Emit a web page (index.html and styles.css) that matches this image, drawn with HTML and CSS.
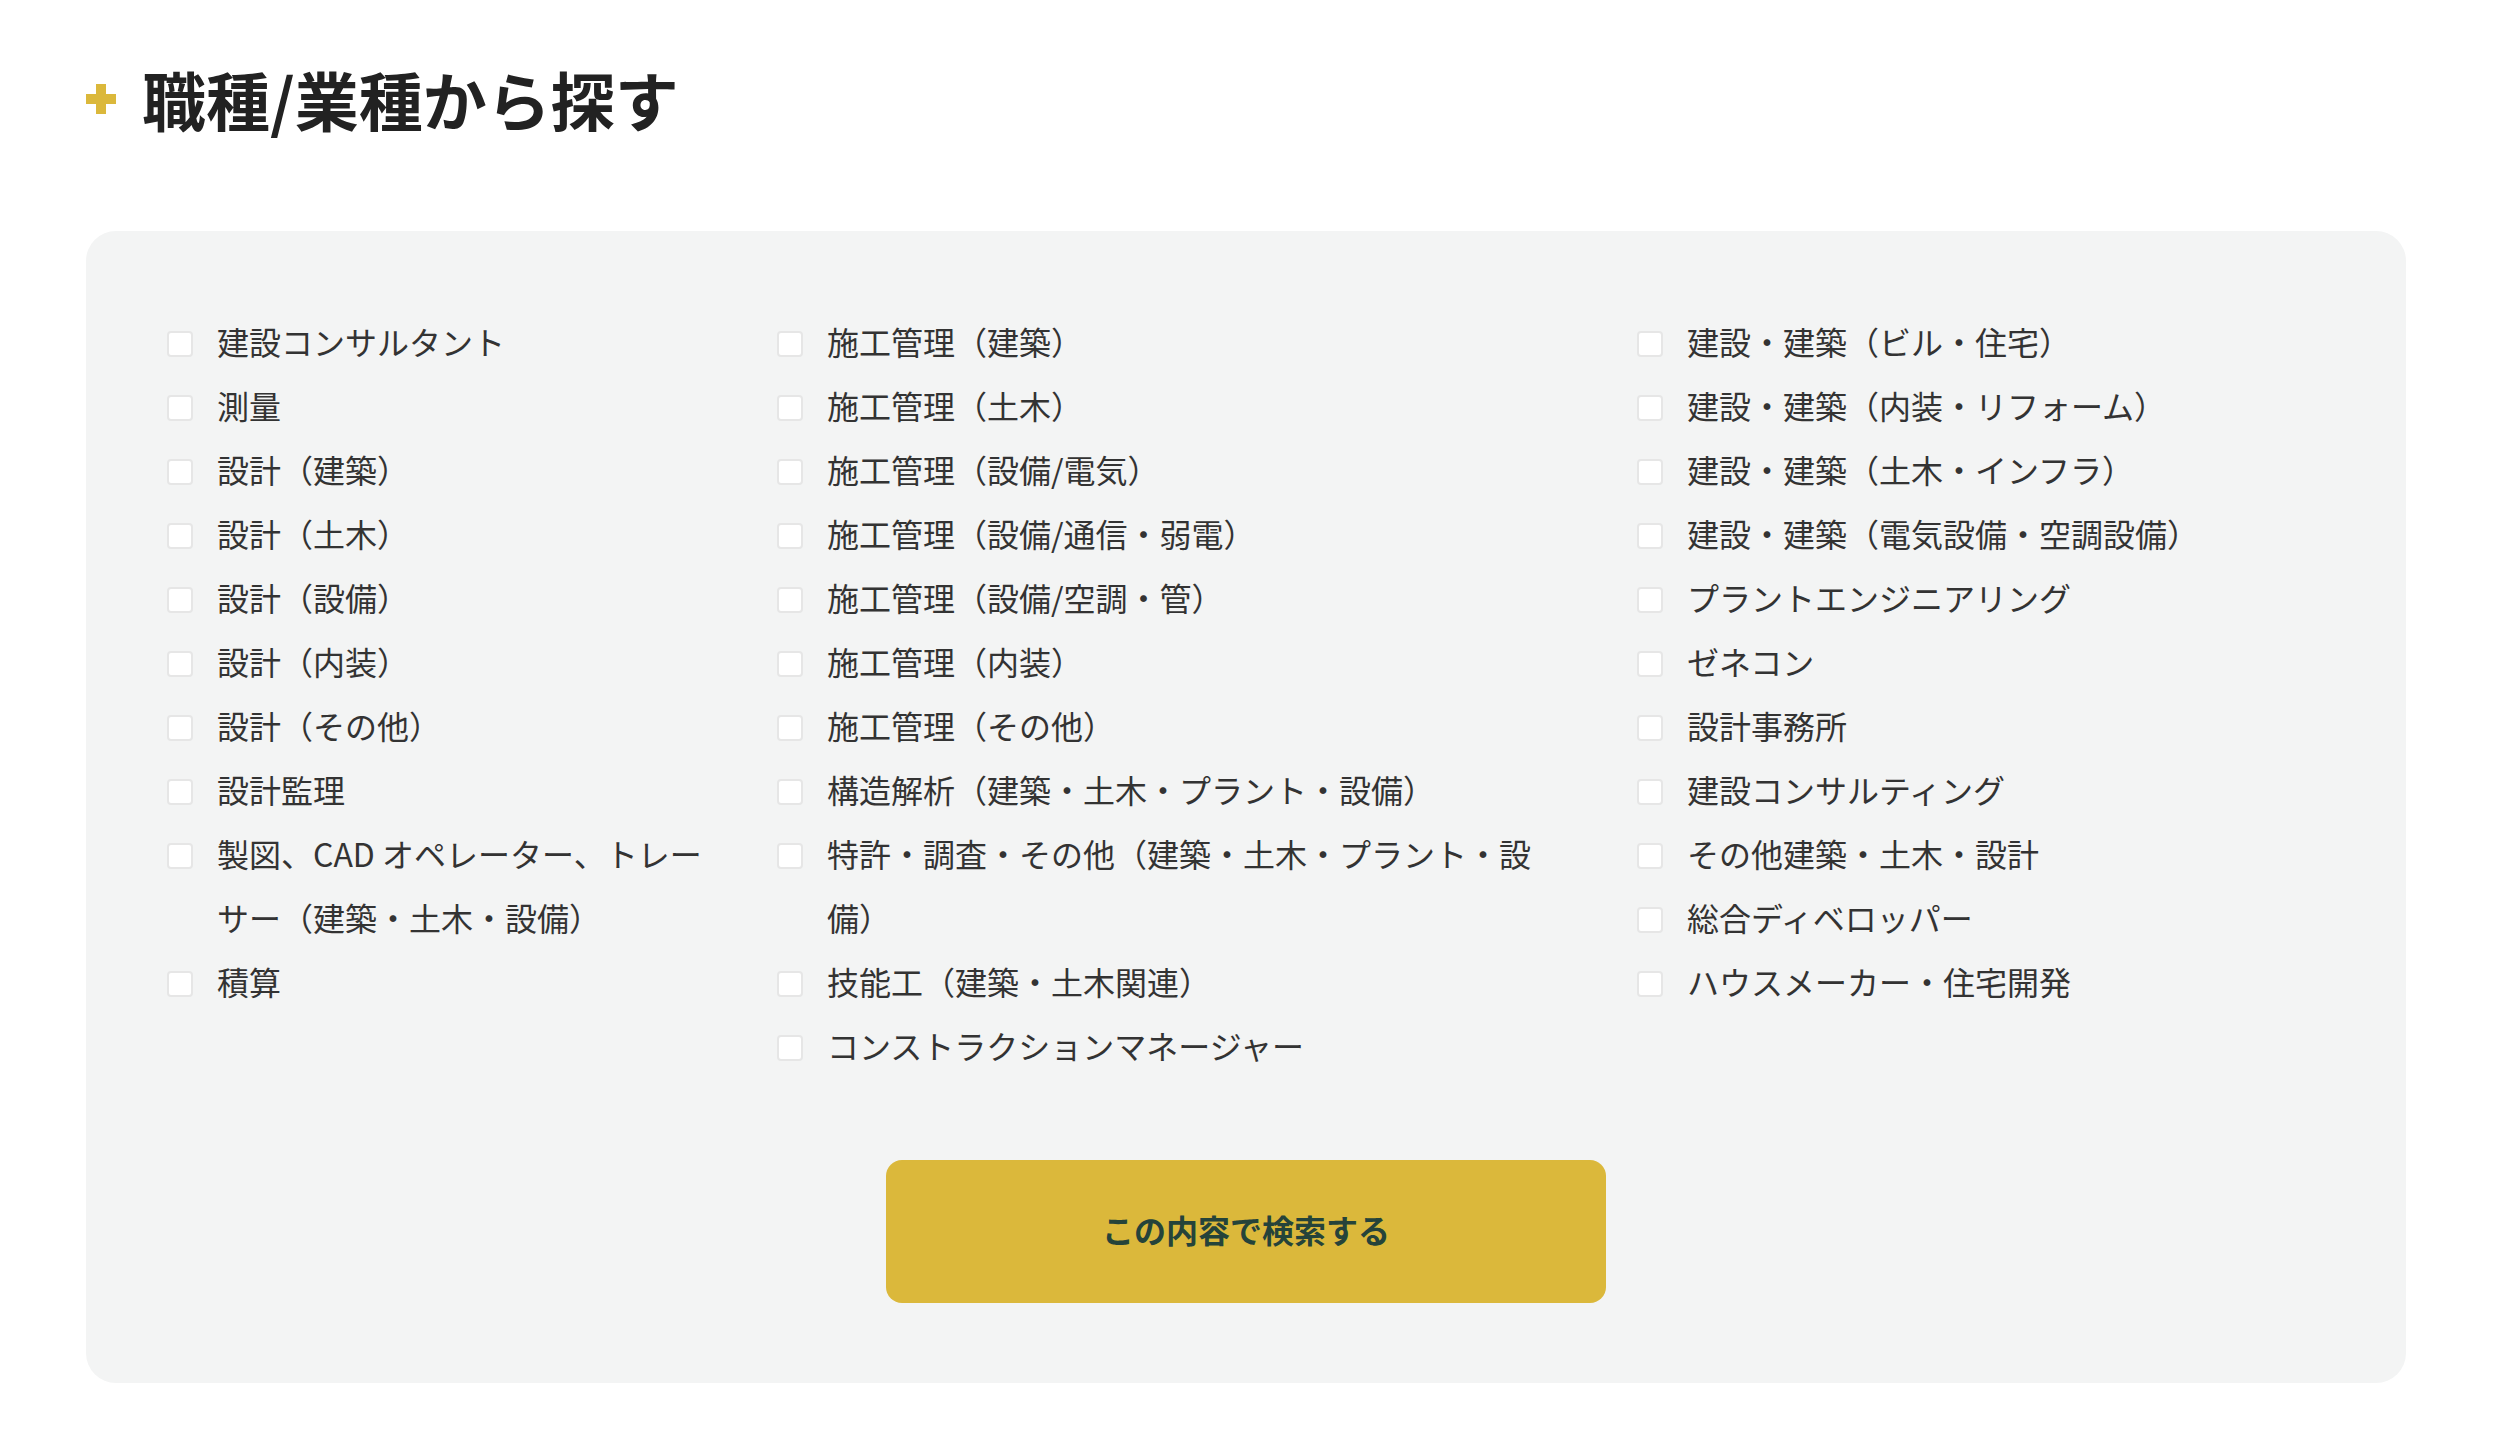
FILE: index.html
```html
<!DOCTYPE html>
<html lang="ja">

<head>
  <meta charset="UTF-8">
  <meta name="viewport" content="width=device-width, initial-scale=1.0">
  <title>職種/業種から探す</title>
  <link rel="stylesheet" href="styles.css">
</head>

<body>

  <section class="job-search">
    <h2 class="job-search-title"><span class="plus-mark"></span>職種/業種から探す</h2>

    <form class="job-panel">
      <div class="job-columns">
        <ul class="job-list job-list-first">
          <li><input type="checkbox"><span>建設コンサルタント</span></li>
          <li><input type="checkbox"><span>測量</span></li>
          <li><input type="checkbox"><span>設計（建築）</span></li>
          <li><input type="checkbox"><span>設計（土木）</span></li>
          <li><input type="checkbox"><span>設計（設備）</span></li>
          <li><input type="checkbox"><span>設計（内装）</span></li>
          <li><input type="checkbox"><span>設計（その他）</span></li>
          <li><input type="checkbox"><span>設計監理</span></li>
          <li><input type="checkbox"><span>製図、CAD オペレーター、トレーサー（建築・土木・設備）</span></li>
          <li><input type="checkbox"><span>積算</span></li>
        </ul>

        <ul class="job-list job-list-second">
          <li><input type="checkbox"><span>施工管理（建築）</span></li>
          <li><input type="checkbox"><span>施工管理（土木）</span></li>
          <li><input type="checkbox"><span>施工管理（設備/電気）</span></li>
          <li><input type="checkbox"><span>施工管理（設備/通信・弱電）</span></li>
          <li><input type="checkbox"><span>施工管理（設備/空調・管）</span></li>
          <li><input type="checkbox"><span>施工管理（内装）</span></li>
          <li><input type="checkbox"><span>施工管理（その他）</span></li>
          <li><input type="checkbox"><span>構造解析（建築・土木・プラント・設備）</span></li>
          <li><input type="checkbox"><span>特許・調査・その他（建築・土木・プラント・設備）</span></li>
          <li><input type="checkbox"><span>技能工（建築・土木関連）</span></li>
          <li><input type="checkbox"><span>コンストラクションマネージャー</span></li>
        </ul>

        <ul class="job-list">
          <li><input type="checkbox"><span>建設・建築（ビル・住宅）</span></li>
          <li><input type="checkbox"><span>建設・建築（内装・リフォーム）</span></li>
          <li><input type="checkbox"><span>建設・建築（土木・インフラ）</span></li>
          <li><input type="checkbox"><span>建設・建築（電気設備・空調設備）</span></li>
          <li><input type="checkbox"><span>プラントエンジニアリング</span></li>
          <li><input type="checkbox"><span>ゼネコン</span></li>
          <li><input type="checkbox"><span>設計事務所</span></li>
          <li><input type="checkbox"><span>建設コンサルティング</span></li>
          <li><input type="checkbox"><span>その他建築・土木・設計</span></li>
          <li><input type="checkbox"><span>総合ディベロッパー</span></li>
          <li><input type="checkbox"><span>ハウスメーカー・住宅開発</span></li>
        </ul>
      </div>

      <button type="button" class="search-button">この内容で検索する</button>
    </form>
  </section>

</body>

</html>
```

FILE: styles.css
```css
body {
  font-family: 'Noto Sans CJK JP', 'Noto Sans', sans-serif;
  margin: 0;
  padding: 0;
  background-color: #fff;
  color: #333;
}

.job-search {
  width: 2320px;
  margin: 0 86px;
  padding-top: 50px;
}

.job-search-title {
  display: flex;
  align-items: center;
  margin: 0 0 85px;
  font-size: 64px;
  line-height: 96px;
  font-weight: bold;
  color: #222;
}

.plus-mark {
  position: relative;
  width: 30px;
  height: 30px;
  margin-right: 26px;
  margin-top: 2px;
}

.plus-mark::before,
.plus-mark::after {
  content: "";
  position: absolute;
  background-color: #dbb83b;
}

.plus-mark::before {
  left: 0;
  right: 0;
  top: 10px;
  height: 10px;
}

.plus-mark::after {
  top: 0;
  bottom: 0;
  left: 10px;
  width: 10px;
}

.job-panel {
  background-color: #f3f4f4;
  border-radius: 30px;
  padding: 78px 81px 80px;
}

.job-columns {
  display: flex;
}

.job-list {
  list-style: none;
  margin: 0;
  padding: 0;
  flex: 1;
}

.job-list-first {
  flex: none;
  width: 560px;
  padding-right: 50px;
}

.job-list-second {
  flex: none;
  width: 770px;
  padding-right: 90px;
}

.job-list li {
  display: flex;
  align-items: flex-start;
  font-size: 32px;
  line-height: 64px;
}

.job-list input[type="checkbox"] {
  appearance: none;
  flex: none;
  width: 26px;
  height: 26px;
  margin: 22px 24px 0 0;
  background-color: #fff;
  border: 2px solid #e6e6e6;
  border-radius: 4px;
  box-sizing: border-box;
}

.search-button {
  display: block;
  width: 720px;
  height: 143px;
  margin: 83px auto 0;
  padding: 0 0 6px;
  background-color: #dbb83b;
  color: #25433a;
  border: none;
  border-radius: 16px;
  font-family: inherit;
  font-size: 32px;
  font-weight: bold;
  cursor: pointer;
}
```
